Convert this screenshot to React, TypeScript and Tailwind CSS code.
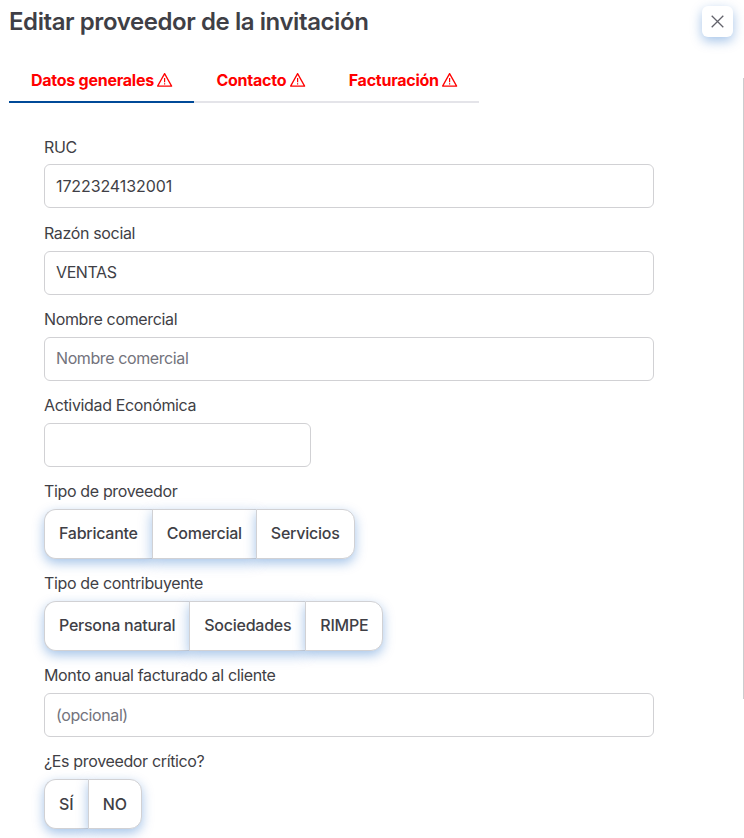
/*
 * EditarProveedor - Dialog body to edit the provider of an invitation
 */

import { useState } from 'react';

const TABS = ['Datos generales', 'Contacto', 'Facturación'];

const SHADOW = 'shadow-[0_4px_12px_rgba(0,90,190,0.36)]';

function WarningIcon() {
  return (
    <svg className="-mt-px h-4 w-[15px] overflow-visible" viewBox="0 0 15 16" fill="none" stroke="currentColor">
      <path d="M7.6 1.6 14.6 14.1H.6Z" strokeWidth="1.3" strokeLinejoin="round" />
      <path d="M7.6 6v4.2M7.6 11.2v1.4" strokeWidth="1.2" />
    </svg>
  );
}

function Label({ text }: { text: string }) {
  return <label className="mb-[5.485px] block h-6 text-base leading-6 tracking-[-0.35px]">{text}</label>;
}

type FieldProps = { label: string; value?: string; placeholder?: string; short?: boolean };

function Field({ label, value, placeholder, short }: FieldProps) {
  const numeric = value !== undefined && /^\d+$/.test(value);

  return (
    <div className="mb-[12.58px]">
      <Label text={label} />
      <input
        defaultValue={value}
        placeholder={placeholder}
        className={`block h-11 rounded-md border border-[#d1d1d4] bg-white px-[11px] pb-[0.4px] text-base outline-none placeholder:text-[#73737c] ${
          short ? 'w-[267px]' : 'w-[610px]'
        } ${numeric ? 'tracking-[-0.1px]' : 'tracking-[-0.4px]'}`}
      />
    </div>
  );
}

function SelectButton({ label, options }: { label: string; options: string[] }) {
  const [selected, setSelected] = useState('');

  return (
    <div className="mb-[12.58px]">
      <Label text={label} />
      <div className="flex">
        {options.map(opt => (
          <button
            key={opt}
            onClick={() => setSelected(opt)}
            className={`h-[50px] border border-r-0 border-[#d1d1d4] px-3.5 text-base font-medium first:rounded-l-xl last:rounded-r-xl last:border-r ${SHADOW} ${
              opt.length > 2 ? 'pb-[1px] tracking-[-0.25px]' : 'tracking-normal'
            } ${selected === opt ? 'bg-[#eef4fc]' : 'bg-white'}`}
          >
            {opt}
          </button>
        ))}
      </div>
    </div>
  );
}

export default function App() {
  const [activeTab, setActiveTab] = useState(0);

  return (
    <div className="h-[838px] overflow-hidden bg-white font-['Inter',sans-serif] text-[#3f3f46]">
      {/* Header */}
      <header className="flex h-[59px] items-start justify-between pr-[11px] pl-[9px]">
        <h1 className="pt-1.5 text-[24px] leading-8 font-semibold tracking-[-0.42px]">
          Editar proveedor de la invitación
        </h1>
        <button
          aria-label="Cerrar"
          className={`mt-1.5 flex h-[31px] w-[31px] items-center justify-center rounded-md bg-white text-[#62626b] ${SHADOW}`}
        >
          <svg className="h-[13px] w-[13px]" viewBox="0 0 13 13" stroke="currentColor" strokeWidth="1.3">
            <path d="M.7.7l11.6 11.6M12.3.7L.7 12.3" />
          </svg>
        </button>
      </header>

      {/* Tabs */}
      <nav className="flex pl-[9px]">
        {TABS.map((tab, i) => (
          <button
            key={tab}
            onClick={() => setActiveTab(i)}
            className={`flex h-11 items-center gap-[3.5px] border-b-2 px-[22px] text-base font-bold tracking-[-0.248px] text-[#ff0000] ${
              activeTab === i ? 'border-[#004a98]' : 'border-[#e4e4e9]'
            }`}
          >
            {tab}
            <WarningIcon />
          </button>
        ))}
      </nav>

      <div className="-mt-[25px] flex items-start justify-between">
        <main className="pt-[57px] pl-11">
          <Field label="RUC" value="1722324132001" />
          <Field label="Razón social" value="VENTAS" />
          <Field label="Nombre comercial" placeholder="Nombre comercial" />
          <Field label="Actividad Económica" short />
          <SelectButton label="Tipo de proveedor" options={['Fabricante', 'Comercial', 'Servicios']} />
          <SelectButton label="Tipo de contribuyente" options={['Persona natural', 'Sociedades', 'RIMPE']} />
          <Field label="Monto anual facturado al cliente" placeholder="(opcional)" />
          <SelectButton label="¿Es proveedor crítico?" options={['SÍ', 'NO']} />
        </main>
        {/* Scrollbar */}
        <div className="h-[621px] w-px bg-[#ccccce]" />
      </div>
    </div>
  );
}
